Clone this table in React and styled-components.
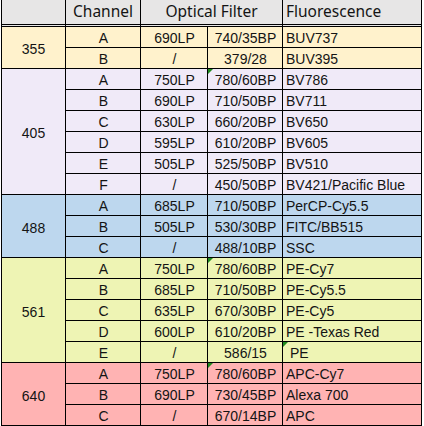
import styled, { createGlobalStyle } from "styled-components";

const GlobalStyle = createGlobalStyle`
  body {
    margin: 0;
    background: #ffffff;
  }
`;

const groups = [
  {
    laser: "355",
    bg: "#fff2cc",
    rows: [
      ["A", "690LP", "740/35BP", "BUV737"],
      ["B", "/", "379/28", "BUV395"],
    ],
  },
  {
    laser: "405",
    bg: "#f0eaf8",
    rows: [
      ["A", "750LP", "780/60BP", "BV786", "bp"],
      ["B", "690LP", "710/50BP", "BV711"],
      ["C", "630LP", "660/20BP", "BV650"],
      ["D", "595LP", "610/20BP", "BV605"],
      ["E", "505LP", "525/50BP", "BV510"],
      ["F", "/", "450/50BP", "BV421/Pacific Blue"],
    ],
  },
  {
    laser: "488",
    bg: "#bdd7ee",
    rows: [
      ["A", "685LP", "710/50BP", "PerCP-Cy5.5"],
      ["B", "505LP", "530/30BP", "FITC/BB515"],
      ["C", "/", "488/10BP", "SSC"],
    ],
  },
  {
    laser: "561",
    bg: "#eef4b4",
    rows: [
      ["A", "750LP", "780/60BP", "PE-Cy7", "bp"],
      ["B", "685LP", "710/50BP", "PE-Cy5.5"],
      ["C", "635LP", "670/30BP", "PE-Cy5"],
      ["D", "600LP", "610/20BP", "PE -Texas Red"],
      ["E", "/", "586/15", " PE", "fl"],
    ],
  },
  {
    laser: "640",
    bg: "#ffb3b3",
    rows: [
      ["A", "750LP", "780/60BP", "APC-Cy7", "bp"],
      ["B", "690LP", "730/45BP", "Alexa 700"],
      ["C", "/", "670/14BP", "APC"],
    ],
  },
];

const Sheet = styled.div`
  display: grid;
  grid-template-columns: 64px 75px 67px 75px 139px;
  width: max-content;
  margin-left: 1px;
  border-left: 1px solid #000;
  color: #141414;
`;

const HeadCell = styled.div`
  box-sizing: border-box;
  height: 27px;
  grid-column: span ${(props) => props.span || 1};
  display: flex;
  align-items: center;
  justify-content: ${(props) => (props.left ? "flex-start" : "center")};
  padding: 0 3px 2px;
  background: #e7e6e6;
  border-right: 1px solid #000;
  border-bottom: 3px double #000;
  font-family: "Noto Sans", sans-serif;
  font-size: 15.5px;
  line-height: 18px;
`;

const LaserCell = styled.div`
  box-sizing: border-box;
  grid-row: span ${(props) => props.rows};
  display: flex;
  align-items: center;
  justify-content: center;
  padding-top: 3px;
  background: ${(props) => props.bg};
  border-right: 1px solid #000;
  border-bottom: 1px solid #000;
  font-family: "Liberation Sans", Arial, sans-serif;
  font-size: 14px;
`;

const Cell = styled.div`
  position: relative;
  box-sizing: border-box;
  height: 21px;
  display: flex;
  align-items: flex-end;
  justify-content: ${(props) => (props.left ? "flex-start" : "center")};
  padding: 0 2px 1px 3px;
  background: ${(props) => props.bg};
  border-right: 1px solid #000;
  border-bottom: 1px solid #000;
  font-family: "Liberation Sans", Arial, sans-serif;
  font-size: 14px;
  line-height: 16px;
  white-space: pre;
`;

const Mark = styled.span`
  position: absolute;
  top: 0;
  left: 0;
  width: 0;
  height: 0;
  border-top: 5px solid #1e8a1e;
  border-right: 5px solid transparent;
`;

function App() {
  return (
    <>
      <GlobalStyle />
      <Sheet>
        <HeadCell />
        <HeadCell>Channel</HeadCell>
        <HeadCell span={2}>Optical Filter</HeadCell>
        <HeadCell left>Fluorescence</HeadCell>
        {groups.map((group) =>
          [
            <LaserCell key={group.laser} rows={group.rows.length} bg={group.bg}>
              {group.laser}
            </LaserCell>,
          ].concat(
            group.rows.flatMap((row, i) => [
              <Cell key={group.laser + i + "ch"} bg={group.bg}>
                {row[0]}
              </Cell>,
              <Cell key={group.laser + i + "lp"} bg={group.bg}>
                {row[1]}
              </Cell>,
              <Cell key={group.laser + i + "bp"} bg={group.bg}>
                {row[4] === "bp" && <Mark />}
                {row[2]}
              </Cell>,
              <Cell key={group.laser + i + "fl"} bg={group.bg} left>
                {row[4] === "fl" && <Mark />}
                {row[3]}
              </Cell>,
            ])
          )
        )}
      </Sheet>
    </>
  );
}

export default App;
